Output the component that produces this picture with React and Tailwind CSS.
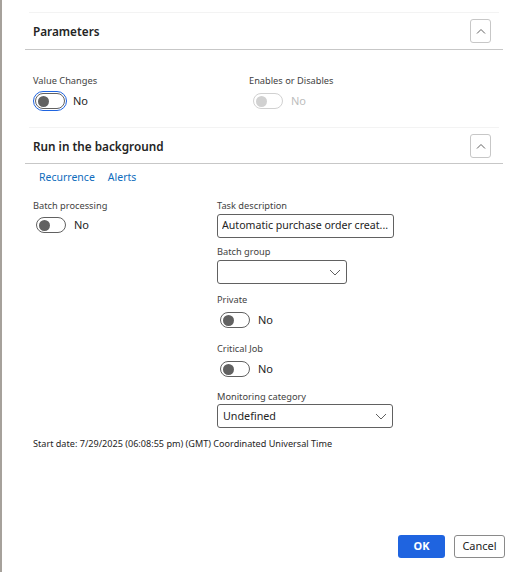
import React from "react";

const font = { fontFamily: '"Segoe UI", "Noto Sans", sans-serif' };

function ChevronUp() {
  return (
    <svg width="10" height="6" viewBox="0 0 10 6" fill="none">
      <polyline points="1,5.5 5,1.5 9,5.5" stroke="#616161" strokeWidth="1" />
    </svg>
  );
}

function ChevronDown() {
  return (
    <svg width="12" height="7" viewBox="0 0 12 7" fill="none">
      <polyline points="1,1 6,6 11,1" stroke="#616161" strokeWidth="1" />
    </svg>
  );
}

function Toggle({ focused, disabled }) {
  return (
    <div
      className={
        "w-[30px] h-[16px] rounded-full border flex items-center px-[2px] " +
        (disabled ? "border-[#d1d1d1] " : "border-[#616161] ") +
        (focused ? "outline outline-[1.5px] outline-offset-[1px] outline-[#1f64e0] rounded-[4px]" : "")
      }
    >
      <div
        className={
          "w-[11px] h-[11px] rounded-full " +
          (disabled ? "bg-[#d1d1d1]" : "bg-[#616161]")
        }
      />
    </div>
  );
}

function ToggleRow({ focused, disabled }) {
  return (
    <div className="flex items-center gap-[8px]">
      <Toggle focused={focused} disabled={disabled} />
      <span className={"text-[11px] leading-[16px] " + (disabled ? "text-[#bdbdbd]" : "text-[#242424]")}>No</span>
    </div>
  );
}

function Label({ children, className = "" }) {
  return (
    <div className={"text-[9.25px] leading-[14px] text-[#424242] " + className}>{children}</div>
  );
}

function SectionHeader({ title, h = "h-[37px]" }) {
  return (
    <div>
      <div className="mx-[4px] h-px bg-[#f3f3f3]" />
      <div className={h + " flex items-center justify-between pl-[8px] pr-[12px] border-b border-[#c7c7c7]"}>
        <span className="mt-[2px] text-[11.75px] font-semibold text-[#242424]">{title}</span>
        <div className="w-[21px] h-[24px] rounded-[3px] border border-[#c7c7c7] flex items-center justify-center">
          <ChevronUp />
        </div>
      </div>
    </div>
  );
}

export default function App() {
  return (
    <div className="w-[521px] h-[572px] flex bg-white overflow-hidden" style={font}>
      <div className="w-[2px] bg-[#a6a19b]" />
      <div className="flex-1 flex flex-col pl-[23px] pr-[18px]">
        <div className="h-[12px]" />
        <SectionHeader title="Parameters" />
        <div className="grid grid-cols-[216px_1fr] pl-[8px] mt-[24px]">
          <div>
            <Label>Value Changes</Label>
            <div className="mt-[5px] ml-[2px]">
              <ToggleRow focused />
            </div>
          </div>
          <div>
            <Label>Enables or Disables</Label>
            <div className="mt-[5px] ml-[4px]">
              <ToggleRow disabled />
            </div>
          </div>
        </div>
        <div className="h-[18px]" />
        <SectionHeader title="Run in the background" h="h-[36px]" />
        <div className="flex gap-[13px] pl-[14px] mt-[5px] text-[10.5px] leading-[16px] text-[#0f6cbd]">
          <span>Recurrence</span>
          <span>Alerts</span>
        </div>
        <div className="grid grid-cols-[184px_1fr] pl-[8px] mt-[14px]">
          <div>
            <Label>Batch processing</Label>
            <div className="mt-[4px] ml-[3px]">
              <ToggleRow />
            </div>
          </div>
          <div className="flex flex-col">
            <Label>Task description</Label>
            <div className="mt-[1px] w-[177px] h-[24px] rounded-[3px] border border-[#616161] px-[4px] flex items-center text-[10.6px] text-[#242424] whitespace-nowrap overflow-hidden">
              <span className="truncate">Automatic purchase order creat...</span>
            </div>
            <Label className="mt-[7px]">Batch group</Label>
            <div className="mt-[1px] w-[130px] h-[24px] rounded-[3px] border border-[#616161] px-[5px] flex items-center justify-end">
              <ChevronDown />
            </div>
            <Label className="mt-[9px]">Private</Label>
            <div className="mt-[5px] ml-[3px]">
              <ToggleRow />
            </div>
            <Label className="mt-[14px]">Critical Job</Label>
            <div className="mt-[5px] ml-[3px]">
              <ToggleRow />
            </div>
            <Label className="mt-[13px]">Monitoring category</Label>
            <div className="w-[176px] h-[24px] rounded-[3px] border border-[#616161] px-[5px] flex items-center justify-between text-[10.75px] text-[#242424]">
              <span>Undefined</span>
              <ChevronDown />
            </div>
          </div>
        </div>
        <div className="pl-[8px] mt-[9px] text-[9.1px] leading-[13px] text-[#242424]">
          Start date: 7/29/2025 (06:08:55 pm) (GMT) Coordinated Universal Time
        </div>
        <div className="mt-auto mb-[14px] mr-[-2px] flex justify-end gap-[9px]">
          <div className="w-[47px] h-[23px] rounded-[3px] bg-[#1f64e0] text-white text-[11px] font-bold flex items-center justify-center">
            OK
          </div>
          <div className="w-[51px] h-[23px] rounded-[3px] border border-[#8a8a8a] text-[#242424] text-[11px] flex items-center justify-center">
            Cancel
          </div>
        </div>
      </div>
    </div>
  );
}
